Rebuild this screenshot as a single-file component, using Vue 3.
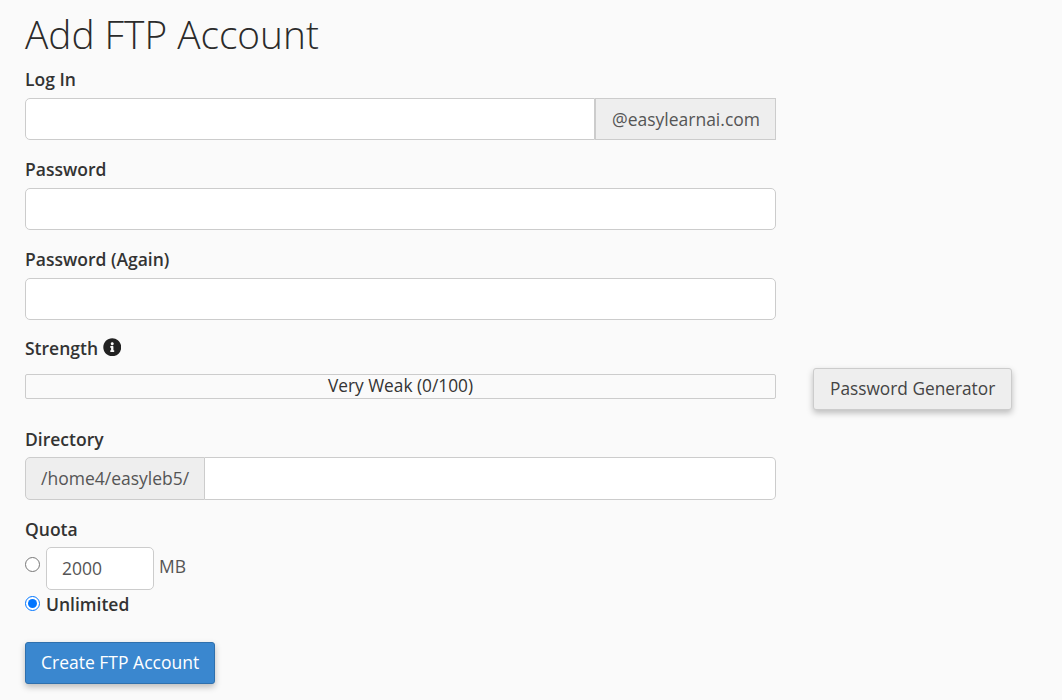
<template>
  <div class="page">
    <h1 class="title">Add FTP Account</h1>
    <form class="form" @submit.prevent>
      <div class="group">
        <label class="label">Log In</label>
        <div class="input-group">
          <input class="control joined-right" type="text" />
          <span class="addon addon-right">@easylearnai.com</span>
        </div>
      </div>
      <div class="group">
        <label class="label">Password</label>
        <input class="control" type="password" />
      </div>
      <div class="group">
        <label class="label">Password (Again)</label>
        <input class="control" type="password" />
      </div>
      <div class="group strength-group">
        <div class="strength-main">
          <label class="label strength-label">
            Strength
            <svg class="info" viewBox="0 0 512 512" aria-hidden="true">
              <path d="M256 8C119.043 8 8 119.083 8 256c0 136.997 111.043 248 248 248s248-111.003 248-248C504 119.083 392.957 8 256 8zm0 110c23.196 0 42 18.804 42 42s-18.804 42-42 42-42-18.804-42-42 18.804-42 42-42zm56 254c0 6.627-5.373 12-12 12h-88c-6.627 0-12-5.373-12-12v-24c0-6.627 5.373-12 12-12h12v-64h-12c-6.627 0-12-5.373-12-12v-24c0-6.627 5.373-12 12-12h64c6.627 0 12 5.373 12 12v100h12c6.627 0 12 5.373 12 12v24z" />
            </svg>
          </label>
          <div class="meter">Very Weak (0/100)</div>
        </div>
        <button class="btn btn-default" type="button">Password Generator</button>
      </div>
      <div class="group tall">
        <label class="label">Directory</label>
        <div class="input-group">
          <span class="addon addon-left">/home4/easyleb5/</span>
          <input class="control joined-left" type="text" />
        </div>
      </div>
      <div class="group tall quota">
        <label class="label">Quota</label>
        <div class="quota-row">
          <input class="radio" type="radio" name="quota" />
          <input class="control quota-input" type="text" value="2000" />
          <span class="unit">MB</span>
        </div>
        <label class="unlimited">
          <input class="radio" type="radio" name="quota" checked />
          Unlimited
        </label>
      </div>
      <button class="btn btn-primary" type="button">Create FTP Account</button>
    </form>
  </div>
</template>

<script setup>
</script>

<style>
html,
body {
  background: #fafafa;
}
</style>

<style scoped>
.page {
  padding: 0 25px;
  height: 700px;
  box-sizing: border-box;
  overflow: hidden;
  font-family: "Open Sans", sans-serif;
  font-size: 17.5px;
  color: #333;
}

.title {
  margin: 0;
  padding: 9px 0 1px;
  font-size: 38.8px;
  font-weight: 300;
  line-height: 50px;
  color: #2b2b2b;
}

.form {
  display: flex;
  flex-direction: column;
}

.group {
  width: 751px;
  height: 90px;
}

.label {
  display: block;
  height: 38px;
  padding-top: 8px;
  box-sizing: border-box;
  font-weight: 600;
  line-height: 23px;
}

.control {
  display: block;
  width: 100%;
  height: 42px;
  box-sizing: border-box;
  padding: 0 15px;
  border: 1px solid #ccc;
  border-radius: 5px;
  background: #fff;
  font: inherit;
  color: #555;
  outline: none;
}

.input-group {
  display: flex;
}

.joined-right {
  flex: 1;
  min-width: 0;
  border-radius: 5px 0 0 5px;
}

.joined-left {
  flex: 1;
  min-width: 0;
  border-left: 0;
  border-radius: 0 5px 5px 0;
}

.addon {
  height: 42px;
  box-sizing: border-box;
  padding: 0 15px;
  border: 1px solid #ccc;
  background: #eee;
  line-height: 40px;
  color: #555;
  white-space: nowrap;
}

.addon-right {
  padding-left: 16px;
}

.addon-left {
  border-radius: 5px 0 0 5px;
}

/* directory and quota rows sit one pixel higher and are one pixel taller */
.tall .label {
  height: 37px;
}

.tall .control,
.tall .addon {
  height: 43px;
}

.strength-group {
  position: relative;
}

.strength-main {
  width: 751px;
}

.strength-label {
  height: 44px;
  padding-top: 7px;
}

.info {
  width: 18.5px;
  height: 18.5px;
  vertical-align: -1px;
  fill: #222;
}

.meter {
  height: 25px;
  box-sizing: border-box;
  border: 1px solid #ccc;
  border-radius: 2px;
  text-align: center;
  font-size: 17.3px;
  line-height: 21px;
}

.btn {
  box-sizing: border-box;
  height: 42px;
  padding: 0 16px 1px;
  border: 1px solid #ccc;
  border-radius: 3px;
  font: inherit;
  box-shadow: 0 3px 6px rgba(0, 0, 0, 0.25);
}

.btn-default {
  position: absolute;
  left: 788px;
  top: 38px;
  font-size: 17.3px;
  background: #eee;
  color: #444;
  white-space: nowrap;
}

.btn-primary {
  align-self: flex-start;
  padding: 0 15px 2px;
  background: #3a87cf;
  border-color: #2f70ad;
  color: #fff;
}

.quota {
  height: 132px;
}

.quota-row {
  display: flex;
  align-items: flex-start;
  height: 43px;
}

.radio {
  width: 15px;
  height: 15px;
  margin: 10px 6px 0 0;
  flex: none;
}

.quota-input {
  width: 108px;
  padding-bottom: 2px;
}

.unit {
  margin-left: 5px;
  line-height: 39px;
  color: #555;
}

.unlimited {
  display: flex;
  align-items: center;
  height: 28px;
  font-weight: 600;
}

.unlimited .radio {
  margin-top: 0;
  margin-bottom: 2px;
}
</style>
